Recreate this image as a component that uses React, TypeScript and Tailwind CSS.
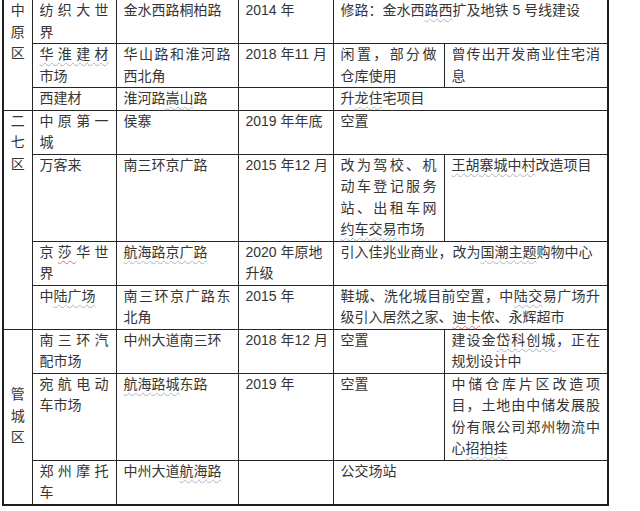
import React from 'react';

// 郑州市场改造表：网格尺寸按截图量出
const W = ({ children, red = false }: { children: React.ReactNode; red?: boolean }) => (
    <span className={`underline decoration-wavy decoration-1 underline-offset-[3px] ${red ? 'decoration-[#e07070]' : 'decoration-[#a9b4c6]'}`}>
        {children}
    </span>
);

// 一行被撑满的文字（Word 里两端对齐后换行的行）
const J = ({ children }: { children: React.ReactNode }) => (
    <span className="block text-justify [text-align-last:justify]">{children}</span>
);

const L = ({ children }: { children?: React.ReactNode }) => <span className="block whitespace-nowrap">{children}</span>;

const td = 'border border-[#262626] px-[7px] align-top';
const district = 'border border-[#262626] px-0 text-center';

export default function App() {
    return (
        <div className="w-[640px] h-[511px] overflow-hidden bg-white">
            <table className="ml-[2px] -mt-[2px] w-[605px] table-fixed border-collapse border-2 border-[#1f1f1f] font-['Liberation_Sans','Noto_Sans_CJK_SC',sans-serif] text-[14px] leading-[21.5px] text-[#353535]">
                <colgroup>
                    <col className="w-[29px]" />
                    <col className="w-[84px]" />
                    <col className="w-[122px]" />
                    <col className="w-[95px]" />
                    <col className="w-[111px]" />
                    <col className="w-[164px]" />
                </colgroup>
                <tbody>
                    <tr>
                        <td rowSpan={3} className={`${district} align-top`}>
                            <L>中</L><L>原</L><L>区</L>
                        </td>
                        <td className={td}><J>纺织大世</J><L>界</L></td>
                        <td className={td}><L>金水西路桐柏路</L></td>
                        <td className={td}><L>2014 年</L></td>
                        <td colSpan={2} className={td}><L>修路：金水西<W>路西</W>扩及地铁 5 号线建设</L></td>
                    </tr>
                    <tr>
                        <td className={td}><J><W>华淮建材</W></J><L>市场</L></td>
                        <td className={td}><J>华山路和淮河路</J><L>西北角</L></td>
                        <td className={td}><L>2018 年11 月</L></td>
                        <td className={td}><J>闲置，部分做</J><L>仓库使用</L></td>
                        <td className={td}><J>曾传出开发商业住宅消</J><L>息</L></td>
                    </tr>
                    <tr>
                        <td className={td}><L>西建材</L></td>
                        <td className={td}><L>淮河路<W>嵩山</W>路</L></td>
                        <td className={td}><L></L></td>
                        <td colSpan={2} className={td}><L>升<W>龙住</W>宅项目</L></td>
                    </tr>

                    <tr>
                        <td rowSpan={4} className={`${district} align-top`}>
                            <L>二</L><L>七</L><L>区</L>
                        </td>
                        <td className={td}><J>中原第一</J><L>城</L></td>
                        <td className={td}><L>侯寨</L></td>
                        <td className={td}><L>2019 年年底</L></td>
                        <td colSpan={2} className={td}><L>空置</L></td>
                    </tr>
                    <tr>
                        <td className={td}><L>万客来</L></td>
                        <td className={td}><L>南三环京广路</L></td>
                        <td className={td}><L>2015 年12 月</L></td>
                        <td className={td}>
                            <J>改为驾校、机</J><J>动车登记服务</J><J>站、出租车网</J><L><W>约车交易</W>市场</L>
                        </td>
                        <td className={td}><L><W>王胡寨城中村</W>改造项目</L></td>
                    </tr>
                    <tr>
                        <td className={td}><J>京<W red>莎</W>华世</J><L>界</L></td>
                        <td className={td}><L><W>航海路京广路</W></L></td>
                        <td className={td}><L>2020 年原地</L><L>升级</L></td>
                        <td colSpan={2} className={td}><L>引入佳兆业商业，改为<W>国潮主题</W>购物中心</L></td>
                    </tr>
                    <tr>
                        <td className={td}><L>中<W>陆广场</W></L></td>
                        <td className={td}><J>南三环京广路东</J><L>北角</L></td>
                        <td className={td}><L>2015 年</L></td>
                        <td colSpan={2} className={td}>
                            <J>鞋城、洗化城目前空置，中<W>陆交</W>易广场升</J>
                            <L>级引入居然之家、<W red>迪卡</W>侬、永辉超市</L>
                        </td>
                    </tr>

                    <tr>
                        <td rowSpan={3} className={`${district} align-middle`}>
                            <L>管</L><L>城</L><L>区</L>
                        </td>
                        <td className={td}><J>南三环汽</J><L>配市场</L></td>
                        <td className={td}><L>中州大道南三环</L></td>
                        <td className={td}><L>2018 年12 月</L></td>
                        <td className={td}><L>空置</L></td>
                        <td className={td}><J>建设金<W>岱科创城</W>，正在</J><L>规划设计中</L></td>
                    </tr>
                    <tr>
                        <td className={td}><J>宛航电动</J><L>车市场</L></td>
                        <td className={td}><L><W>航海路城</W>东路</L></td>
                        <td className={td}><L>2019 年</L></td>
                        <td className={td}><L>空置</L></td>
                        <td className={td}>
                            <J>中储仓库片区改造项</J>
                            <J>目，土地由中储发展股</J>
                            <J>份有限公司郑州物流中</J>
                            <L>心<W>招拍挂</W></L>
                        </td>
                    </tr>
                    <tr>
                        <td className={td}><J>郑州摩托</J><L>车</L></td>
                        <td className={td}><L>中州大道<W>航海路</W></L></td>
                        <td className={td}><L></L></td>
                        <td colSpan={2} className={td}><L>公交场站</L></td>
                    </tr>
                </tbody>
            </table>
        </div>
    );
}
